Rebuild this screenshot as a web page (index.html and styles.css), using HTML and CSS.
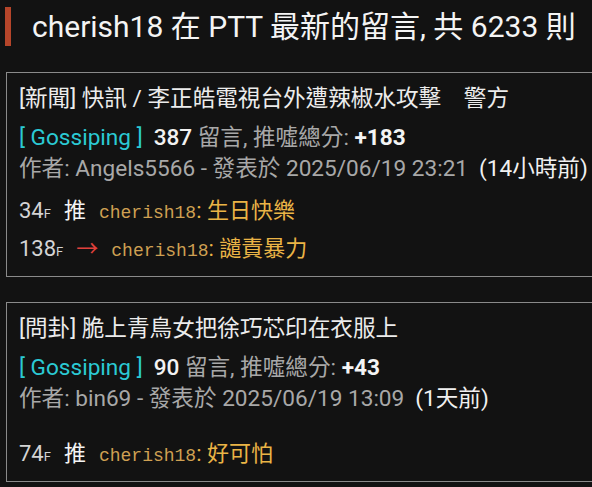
FILE: index.html
```html
<!DOCTYPE html>
<html lang="zh-Hant">
<head>
<meta charset="utf-8">
<title>cherish18 在 PTT 最新的留言</title>
<link rel="stylesheet" href="styles.css">
</head>
<body>
<header class="page-head">
  <span class="head-bar"></span>
  <h1 class="head-title">cherish18 在 PTT 最新的留言, 共 6233 則</h1>
</header>

<section class="box">
  <div class="post-title">[新聞] 快訊 / 李正皓電視台外遭辣椒水攻擊　警方</div>
  <div class="stats"><span class="board">[ Gossiping ]</span><span class="num">387</span> 留言, 推噓總分: <span class="score">+183</span></div>
  <div class="author">作者: Angels5566 - 發表於 2025/06/19 23:21<span class="ago">(14小時前)</span></div>
  <div class="comments">
    <div class="comment"><span class="floor">34<small>F</small></span><span class="tag push">推</span><span class="user">cherish18</span><span class="msg">: 生日快樂</span></div>
    <div class="comment"><span class="floor">138<small>F</small></span><span class="tag arrow">→</span><span class="user">cherish18</span><span class="msg">: 譴責暴力</span></div>
  </div>
</section>

<section class="box">
  <div class="post-title">[問卦] 脆上青鳥女把徐巧芯印在衣服上</div>
  <div class="stats"><span class="board">[ Gossiping ]</span><span class="num">90</span> 留言, 推噓總分: <span class="score">+43</span></div>
  <div class="author">作者: bin69 - 發表於 2025/06/19 13:09<span class="ago">(1天前)</span></div>
  <div class="comments comments-spaced">
    <div class="comment"><span class="floor">74<small>F</small></span><span class="tag push">推</span><span class="user">cherish18</span><span class="msg">: 好可怕</span></div>
  </div>
</section>
</body>
</html>
```

FILE: styles.css
```css
html {
  overflow: hidden;
  background: #121212;
}
body {
  margin: 0;
  width: 620px;
  background: #121212;
  color: #e8e8e8;
  font-family: Roboto, "Noto Sans CJK TC", sans-serif;
  font-size: 22.6px;
}
.page-head {
  display: flex;
  align-items: center;
  margin: 7px 0 0 5px;
  height: 39px;
}
.head-bar {
  width: 6px;
  height: 39px;
  background: #b5452a;
  flex: none;
}
.head-title {
  margin: 0 0 0 21px;
  font-size: 30px;
  font-weight: 400;
  color: #f4f4f4;
  line-height: 39px;
  white-space: nowrap;
}
.box {
  margin: 26px 0 0 6px;
  width: 600px;
  border: 1px solid #8a8a8a;
  padding: 11px 12px 8px;
  box-sizing: border-box;
  white-space: nowrap;
}
.box + .box {
  margin-top: 25px;
}
.post-title {
  height: 30px;
  line-height: 30px;
  color: #ececec;
}
.stats {
  margin-top: 9px;
  height: 30px;
  line-height: 30px;
  color: #a8a8a8;
}
.board {
  color: #2bcad4;
  margin-right: 11px;
}
.num {
  color: #f2f2f2;
  font-weight: 500;
}
.score {
  color: #f4f4f4;
  font-weight: 700;
}
.author {
  height: 32px;
  line-height: 32px;
  color: #a8a8a8;
}
.ago {
  color: #f0f0f0;
  margin-left: 11px;
}
.comments {
  margin-top: 7px;
}
.comments-spaced {
  margin-top: 20px;
}
.comment {
  display: flex;
  align-items: baseline;
  height: 38px;
  line-height: 38px;
  overflow: hidden;
  font-size: 22px;
}
.floor {
  color: #d4d4d4;
}
.floor small {
  font-size: 13px;
}
.tag {
  margin: 0 13px 0 13px;
}
.push {
  color: #f4f4f4;
}
.arrow {
  color: #e0413c;
}
.user {
  font-family: "Liberation Mono", monospace;
  font-size: 18px;
  color: #cfa052;
}
.msg {
  color: #eab446;
}
```
